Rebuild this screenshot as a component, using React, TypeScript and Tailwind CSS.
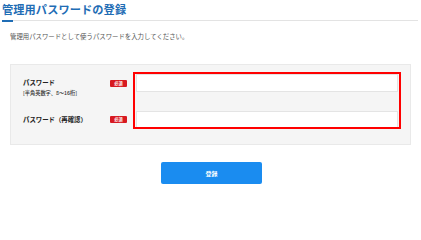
export default function App() {
  return (
    <div className="h-[207px] w-[421px] bg-white font-['Noto_Sans_CJK_JP',sans-serif] text-[#333]">
      <div className="px-[2px] pt-[2px]">
        <h1 className="text-[11.2px] font-bold leading-[14px] tracking-[0.1px] text-[#1f6db5]">
          管理用パスワードの登録
        </h1>
        <div className="mt-[4px] flex h-[1px] w-[416px] bg-[#e3e3e3]">
          <div className="-mt-[0.5px] h-[2px] w-[11px] bg-[#1f6db5]" />
        </div>
      </div>

      <p className="mt-[12px] pl-[10px] text-[6.4px] leading-[8px] text-[#555]">
        管理用パスワードとして使うパスワードを入力してください。
      </p>

      <div className="relative mt-[23px] ml-[10px] w-[401px] border border-[#e9e9e9] bg-[#f5f5f5] px-[12px] pt-[9px] pb-[16px]">
        <div className="flex h-[18px] items-start">
          <div className="w-[87px] pt-[5px]">
            <div className="text-[6.4px] font-bold leading-[8px] text-[#222]">パスワード</div>
            <div className="mt-[3px] whitespace-nowrap text-[5.2px] font-medium leading-[6px] text-[#333]">[半角英数字、8～16桁]</div>
          </div>
          <span className="mt-[6px] flex h-[7px] w-[17px] items-center justify-center rounded-[1px] bg-[#d71920] text-[4.2px] font-bold leading-none text-white">
            必須
          </span>
          <div className="ml-[9px] h-[18px] flex-1 border border-[#e4e4e4] bg-white" />
        </div>

        <div className="mt-[19px] flex items-center">
          <div className="w-[87px] text-[6.4px] font-bold leading-[8px] text-[#222]">パスワード（再確認）</div>
          <span className="flex h-[7px] w-[17px] items-center justify-center rounded-[1px] bg-[#d71920] text-[4.2px] font-bold leading-none text-white">
            必須
          </span>
          <div className="ml-[9px] h-[17px] flex-1 border border-[#e4e4e4] bg-white" />
        </div>

        <div className="pointer-events-none absolute top-[7px] left-[122px] h-[57px] w-[268px] border-2 border-[#ff0000]" />
      </div>

      <div className="mt-[17px] flex justify-center">
        <button
          type="button"
          className="ml-[2px] h-[22px] w-[101px] rounded-[2px] bg-[#1a8cf0] text-[6px] font-bold text-white"
        >
          登録
        </button>
      </div>
    </div>
  );
}
